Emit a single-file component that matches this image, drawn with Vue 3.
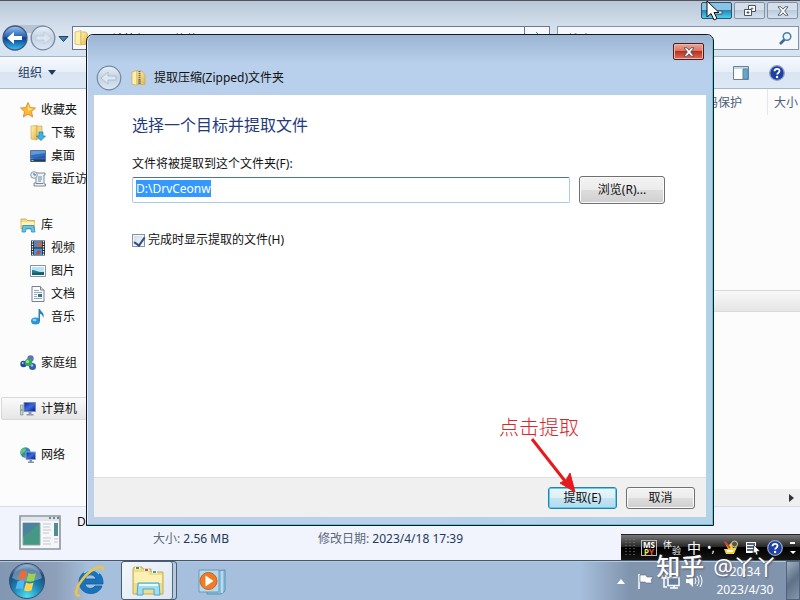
<script setup>
import { ref, onMounted } from "vue";

const folderPath = ref("D:\\DrvCeonw");
const showFiles = ref(true);
const searchText = ref("");
const pathInput = ref(null);

const navGroups = [
  [
    { name: "收藏夹", icon: "star", root: true },
    { name: "下载", icon: "download" },
    { name: "桌面", icon: "desktop" },
    { name: "最近访问的位置", icon: "recent" },
  ],
  [
    { name: "库", icon: "library", root: true },
    { name: "视频", icon: "video" },
    { name: "图片", icon: "picture" },
    { name: "文档", icon: "document" },
    { name: "音乐", icon: "music" },
  ],
  [{ name: "家庭组", icon: "homegroup", root: true }],
  [{ name: "计算机", icon: "computer", root: true, active: true }],
  [{ name: "网络", icon: "network", root: true }],
];

onMounted(() => {
  pathInput.value.focus();
  pathInput.value.select();
});
</script>

<template>
  <div class="screen">
    <!-- shared icon shapes -->
    <svg class="sprite" aria-hidden="true">
      <defs>
        <linearGradient id="gold" x1="0" y1="0" x2="1" y2="1">
          <stop offset="0" stop-color="#fff3b0" />
          <stop offset="1" stop-color="#e3b548" />
        </linearGradient>
        <linearGradient id="blueScreen" x1="0" y1="0" x2="1" y2="1">
          <stop offset="0" stop-color="#0a1fa8" />
          <stop offset="0.5" stop-color="#3a6be0" />
          <stop offset="1" stop-color="#0714a0" />
        </linearGradient>
        <linearGradient id="backBlue" x1="0" y1="0" x2="0" y2="1">
          <stop offset="0" stop-color="#9cc3ee" />
          <stop offset="0.45" stop-color="#2462b4" />
          <stop offset="0.5" stop-color="#0b3b8c" />
          <stop offset="1" stop-color="#35c3f5" />
        </linearGradient>
        <linearGradient id="glass" x1="0" y1="0" x2="0" y2="1">
          <stop offset="0" stop-color="#e9f0f8" />
          <stop offset="0.5" stop-color="#c3d1e2" />
          <stop offset="1" stop-color="#dde8f4" />
        </linearGradient>
        <radialGradient id="orb" cx="0.5" cy="0.95" r="0.95">
          <stop offset="0" stop-color="#4fe0f5" />
          <stop offset="0.45" stop-color="#1b82b4" />
          <stop offset="0.8" stop-color="#1d4878" />
          <stop offset="1" stop-color="#8fb0cc" />
        </radialGradient>
      </defs>
      <symbol id="star" viewBox="0 0 16 16">
        <path d="M8 .5l2.2 5 5.3.5-4 3.6 1.2 5.4L8 12.2 3.300 15l1.200-5.400-4-3.600 5.300-.5z" fill="#fdb833" stroke="#d9822b" stroke-width=".8" />
        <path d="M8 2.500l1.500 3.800 3.500.4L8 9z" fill="#ffe88a" />
      </symbol>
      <symbol id="download" viewBox="0 0 16 16">
        <path d="M1 1l6-.5V15L1 14z" fill="url(#gold)" stroke="#c8a24a" stroke-width=".6" />
        <path d="M7 1h5v13H7z" fill="#f0d680" stroke="#c8a24a" stroke-width=".6" />
        <path d="M9 7h4v4h2.500L11 15.600 6.500 11H9z" fill="#35b5e8" stroke="#1a7db5" stroke-width=".7" />
      </symbol>
      <symbol id="desktop" viewBox="0 0 16 16">
        <path d="M.5 2.500h15v11H.5z" fill="#2e63b5" stroke="#5b7596" />
        <path d="M1 3h14v4L1 11z" fill="#5f9bdc" />
        <path d="M1 7l14-2v5H1z" fill="#2358b0" opacity=".7" />
        <path d="M1 11.500h14v2H1z" fill="#273c58" />
        <path d="M1.500 12h2v1h-2z" fill="#8ee26c" />
      </symbol>
      <symbol id="recent" viewBox="0 0 16 16">
        <path d="M5 2h10v2h-1v9h1.500v2H4v-3h2V8z" fill="#edf1f4" stroke="#7d8a96" />
        <path d="M8 6h4M8 8h4M8 10h3M6 12.500h7" stroke="#6f8aa3" />
        <circle cx="4" cy="4" r="3.300" fill="#e6f0f8" stroke="#8a99a8" />
        <path d="M4 2v2h2" fill="none" stroke="#44688e" />
      </symbol>
      <symbol id="library" viewBox="0 0 16 16">
        <path d="M1 2h5l1 1.500h7.500V12H1z" fill="#f5dc85" stroke="#c5a44b" stroke-width=".8" />
        <path d="M1.500 5h13v3h-13z" fill="#fff2b4" />
        <path d="M2 15l1-6.500h10.500L15 15h-3.500l-.5-3.500H6L5.500 15z" fill="#62c5e8" stroke="#2c8bb8" stroke-width=".8" />
      </symbol>
      <symbol id="video" viewBox="0 0 16 16">
        <path d="M1 .5h14v15H1z" fill="#1e2633" />
        <path d="M4 1h8v6.500H4z" fill="#4c86c6" />
        <path d="M4 8.500h8V15H4z" fill="#3d9bdd" />
        <path d="M8 2l4 1v4L6 6z" fill="#c46b4c" />
        <path d="M8 10l3 1-1 3-5 1z" fill="#b65145" />
        <path d="M2.500 1v14M13.500 1v14" stroke="#e8edf2" stroke-width="1.400" stroke-dasharray="1.500 1" />
      </symbol>
      <symbol id="picture" viewBox="0 0 16 16">
        <path d="M.5 2.500h15v11H.5z" fill="#fff" stroke="#8795a3" />
        <path d="M2 4h12v8H2z" fill="#b5e6f7" />
        <path d="M2 7c4 0 6 3 12 2v3H2z" fill="#227f91" />
        <path d="M2 10l12-1v3H2z" fill="#15606b" />
      </symbol>
      <symbol id="document" viewBox="0 0 16 16">
        <path d="M2 .5h8.500L14 4v11.500H2z" fill="#fafcfd" stroke="#77828f" />
        <path d="M10.500.5V4H14" fill="#dbe3ea" stroke="#77828f" />
        <path d="M4 4.500h5M4 6.500h8M4 8.500h3M4 10.500h3M4 12.500h8" stroke="#8b9eaf" stroke-width=".9" />
        <path d="M8 8h4v3H8z" fill="#3a6f8c" />
      </symbol>
      <symbol id="music" viewBox="0 0 16 16">
        <ellipse cx="5.500" cy="12" rx="4.500" ry="3.500" fill="#2c93d8" />
        <ellipse cx="4.500" cy="11" rx="2" ry="1.200" fill="#8bd2f5" />
        <path d="M8.500 0h1.500c.5 3 5.500 4 3 9 0-3-1.500-4-3-4.300V12H8.500z" fill="#2a83b7" />
      </symbol>
      <symbol id="homegroup" viewBox="0 0 16 16">
        <circle cx="10.500" cy="3.500" r="3.200" fill="#5677b8" />
        <circle cx="3.500" cy="9" r="3.200" fill="#2848a4" />
        <circle cx="12.500" cy="11.500" r="3.500" fill="#355fae" />
        <circle cx="8.500" cy="7.500" r="3.800" fill="#37a85a" />
        <circle cx="7.500" cy="6.500" r="1.500" fill="#a5e59a" />
        <circle cx="2.800" cy="8" r="1" fill="#a9c9f5" />
        <circle cx="12" cy="10.500" r="1.200" fill="#9bc2f0" />
      </symbol>
      <symbol id="computer" viewBox="0 0 16 16">
        <path d="M.5 4h2.500v10H.5z" fill="#c7d0d8" stroke="#7c8995" stroke-width=".7" />
        <path d="M1 8h1.500v2H1z" fill="#63c04d" />
        <path d="M4 1.500h11.500v9H4z" fill="url(#blueScreen)" stroke="#7d8da3" />
        <path d="M8.500 11h3v2h2v1.500h-7V13h2z" fill="#8d9cad" />
      </symbol>
      <symbol id="network" viewBox="0 0 16 16">
        <circle cx="5.500" cy="5.500" r="5.200" fill="#2e87c8" />
        <path d="M2 2c3-2 5 0 3.500 2S2 6 1 8C0 6 0 4 2 2z" fill="#65c66b" />
        <path d="M3 8h3v2.500L4 10z" fill="#4cab52" />
        <path d="M6 5h9.500v7.500H6z" fill="url(#blueScreen)" stroke="#91a2bb" />
        <path d="M9.500 13h2.500v1.500h2V16H8v-1.500h1.500z" fill="#8495aa" />
      </symbol>
      <symbol id="zip" viewBox="0 0 16 16">
        <path d="M1 2l5-1.500V15l-5-.8z" fill="#fff0a8" stroke="#c8a544" stroke-width=".6" />
        <path d="M6 1h5l3 4v9.500H6z" fill="url(#gold)" stroke="#c8a544" stroke-width=".6" />
        <path d="M8.500 1v13" stroke="#69675c" stroke-width="2" stroke-dasharray="1.200 .8" />
        <path d="M7.500 10h2v3.500h-2z" fill="#89867b" />
      </symbol>
      <symbol id="folder" viewBox="0 0 16 16">
        <path d="M1 2l6-1.500V15l-6-.8z" fill="#fff0a8" stroke="#c8a544" stroke-width=".6" />
        <path d="M7 2h5l1.500 2v10.500H7z" fill="url(#gold)" stroke="#c8a544" stroke-width=".6" />
      </symbol>
      <symbol id="help" viewBox="0 0 16 16">
        <circle cx="8" cy="8" r="7.300" fill="#1e3fa6" stroke="#90a2c3" stroke-width="1.300" />
        <path d="M5.500 6.300C5.500 3 10.500 3 10.500 6c0 1.800-2.400 2-2.400 3.500" fill="none" stroke="#fff" stroke-width="1.800" />
        <circle cx="8.100" cy="12" r="1.200" fill="#fff" />
      </symbol>
      <symbol id="closeX" viewBox="0 0 12 10">
        <path d="M1 .8h3l2 2.400L8 .8h3L7.700 5 11 9.200H8L6 6.800 4 9.200H1L4.300 5z" fill="#fff" stroke="#4a5363" stroke-width=".9" />
      </symbol>
    </svg>

    <main class="explorer">
      <header class="top">
        <div class="window-buttons">
          <button class="win-btn hot" aria-label="最小化">
            <svg width="12" height="10" viewBox="0 0 12 10"><path d="M1 5h10v3H1z" fill="#fff" stroke="#35526e" /></svg>
          </button>
          <button class="win-btn" aria-label="还原">
            <svg width="12" height="11" viewBox="0 0 12 11">
              <path d="M4.500.5h7v6h-7z" fill="#fff" stroke="#4a5363" />
              <path d="M7 3h2v1H7z" fill="#aebdd0" stroke="#4a5363" stroke-width=".6" />
              <path d="M.5 4.500h7v6h-7z" fill="#fff" stroke="#4a5363" />
              <path d="M3 7h2v1H3z" fill="#aebdd0" stroke="#4a5363" />
            </svg>
          </button>
          <button class="win-btn" aria-label="关闭">
            <svg width="12" height="10"><use href="#closeX" /></svg>
          </button>
        </div>
        <div class="nav-row">
          <svg class="nav-arrows" width="70" height="28" viewBox="0 0 70 28">
            <path d="M14 1h30v8H14z" fill="#b4c4d6" />
            <circle cx="15" cy="14" r="12" fill="url(#backBlue)" stroke="#41587a" stroke-width="1.300" />
            <path d="M7 14l7-6v4h8v4h-8v4z" fill="#fff" />
            <circle cx="43" cy="14" r="11.800" fill="url(#glass)" stroke="#7688a0" stroke-width="1.300" />
            <path d="M51 14l-7-6v4h-8v4h8v4z" fill="#dce6f0" stroke="#b6c5d6" stroke-width=".6" />
            <path d="M59 12.500h9l-4.500 5z" fill="#3d86b4" stroke="#27405f" />
          </svg>
          <div class="address">
            <svg width="16" height="16"><use href="#folder" /></svg>
            <span>计算机</span>
            <span>软件 (D:)</span>
            <span>D</span>
            <span>DrvCeonw</span>
            <button class="refresh" aria-label="刷新">
              <svg width="14" height="14" viewBox="0 0 14 14"><path d="M3 9V4h5M6 1l3 3-3 3M11 5v5H6" fill="none" stroke="#3e8a76" /></svg>
            </button>
          </div>
          <label class="search">
            <input v-model="searchText" type="text" placeholder="搜索" aria-label="搜索" />
            <svg width="15" height="15" viewBox="0 0 15 15">
              <path d="M7 8L2 13" stroke="#426995" stroke-width="2.600" />
              <circle cx="9" cy="5.500" r="3.800" fill="#e8f4fc" stroke="#4e7ca9" stroke-width="1.500" />
            </svg>
          </label>
        </div>
      </header>

      <nav class="toolbar">
        <button class="organize">
          组织
          <svg width="8" height="5" viewBox="0 0 8 5"><path d="M0 0h8L4 5z" fill="#1e395b" /></svg>
        </button>
        <button class="tool" aria-label="预览窗格">
          <svg width="16" height="14" viewBox="0 0 16 14">
            <path d="M.5.5h15v13H.5z" fill="#fff" stroke="#66809f" />
            <path d="M1 1h14v2H1z" fill="#c5d7ea" />
            <path d="M10 3h5v10h-5z" fill="#5eaac8" stroke="#66809f" />
          </svg>
        </button>
        <button class="tool" aria-label="帮助">
          <svg width="16" height="16"><use href="#help" /></svg>
        </button>
      </nav>

      <div class="body">
        <aside class="sidebar">
          <ul v-for="(group, index) in navGroups" :key="index">
            <li v-for="item in group" :key="item.name">
              <a href="#" :class="{ root: item.root, active: item.active }">
                <svg width="16" height="16"><use :href="'#' + item.icon" /></svg>
                {{ item.name }}
              </a>
            </li>
          </ul>
        </aside>
        <section class="files">
          <div class="columns">
            <span>密码保护</span>
            <span class="size-col">大小</span>
          </div>
          <div class="selected-row"></div>
          <div class="scrollbar">
            <svg width="5" height="8" viewBox="0 0 5 8"><path d="M0 0l5 4-5 4z" fill="#333" /></svg>
          </div>
        </section>
      </div>

      <footer class="details">
        <svg width="42" height="35" viewBox="0 0 42 35">
          <path d="M1 1h40v33H1z" fill="#f4f6f8" stroke="#8b959f" stroke-width="1.600" />
          <path d="M2 2h38v4H2z" fill="#dfe5eb" />
          <path d="M30 3h2M34 3h2M38 3h2" stroke="#56616c" stroke-width="1.500" />
          <path d="M4 8h17v22H4z" fill="#459884" stroke="#8fa1ac" />
          <path d="M4 8h17L4 22z" fill="#4e83a0" />
          <path d="M24 9h8M24 12h7M24 15h8M24 18h6M24 23h8M24 26h7M24 29h8" stroke="#bfc9d1" />
          <path d="M35 8h4v13h-4z" fill="#508d91" />
          <path d="M35 24h4M35 27h4" stroke="#bfc9d1" />
        </svg>
        <div class="details-text">
          <span class="file-name">DrvCeonw</span>
          <div class="facts">
            <span>大小: <b>2.56 MB</b></span>
            <span>修改日期: <b>2023/4/18 17:39</b></span>
          </div>
        </div>
      </footer>
    </main>

    <footer class="taskbar">
      <button class="start" aria-label="开始">
        <svg width="38" height="38" viewBox="0 0 38 38">
          <circle cx="19" cy="19" r="17.500" fill="url(#orb)" stroke="#35506c" />
          <path d="M4 16C6 5 15 3 19 3s13 2 15 13c-9 4-20 5-30 0z" fill="#c9deee" opacity=".4" />
          <path d="M12 10c3-2 5-1 7 0l-2 8c-3-2-5-1-7 0z" fill="#f06a35" />
          <path d="M20.500 11c3 1.500 5 1 7.500 0l-2 8c-3 1-5 1-7.500 0z" fill="#9bd14d" />
          <path d="M9.500 19.500c3-1.500 5-1 7 0l-2 8c-2-1.500-5-1-7 0z" fill="#55b5ef" />
          <path d="M18 20.500c3 1.500 5 1 7.500 0l-2 8c-3 1-5 1-7.500 0z" fill="#ffd34a" />
        </svg>
      </button>
      <button class="task" aria-label="Internet Explorer">
        <svg width="34" height="34" viewBox="0 0 34 34">
          <path d="M30 20H12c1 5 7 6 10 2h7c-3 10-21 11-23-3C5 3 31 1 30 20zM12 15h11c-1-5-9-6-11 0z" fill="#1873bd" stroke="#125c99" stroke-width=".8" />
          <path d="M11 9c4-4 12-4 15 1" fill="none" stroke="#8cd2f5" stroke-width="1.500" />
          <path d="M30 6c1-7-13-1-21 10-7 9-8 18-2 15" fill="none" stroke="#edc34a" stroke-width="2.600" />
        </svg>
      </button>
      <button class="task current" aria-label="资源管理器">
        <svg width="34" height="32" viewBox="0 0 34 32">
          <path d="M2 4l1-2h8l1 2h8v3h12v22H2z" fill="#eedd8b" stroke="#c7aa51" />
          <path d="M3 7h14l2 3h12v8H3z" fill="#fcf1b2" />
          <path d="M4 3h5M13 5h5M21 7h5" stroke="#fff" stroke-width="2.500" />
          <path d="M5 3h3" stroke="#3c994c" stroke-width="2" />
          <path d="M14 5h3" stroke="#d05042" stroke-width="2" />
          <path d="M22 7h3" stroke="#3d9bb4" stroke-width="2" />
          <path d="M6 30l1-12h21l1 12h-6v-6H12v6z" fill="#9fdcf0" stroke="#4fa5c8" />
          <path d="M8 20h19" stroke="#e4faff" stroke-width="2" />
        </svg>
      </button>
      <button class="task player" aria-label="媒体播放器">
        <svg width="28" height="28" viewBox="0 0 28 28">
          <path d="M9 4l18-1v21l-4 3H9z" fill="#8fc1dc" stroke="#5793b8" />
          <path d="M24 4v22" stroke="#e2f3fc" />
          <path d="M1 3h20v22H1z" fill="#b8d9eb" stroke="#669bbe" />
          <circle cx="10.500" cy="14" r="8.500" fill="#ee7c24" stroke="#c96522" />
          <path d="M7.500 8.500l8 5.500-8 5.500z" fill="#fff" />
        </svg>
      </button>
      <div class="tray">
        <svg class="tray-icons" width="88" height="18" viewBox="0 0 88 18">
          <path d="M1 12l4-5 4 5z" fill="#fff" />
          <path d="M23 2v15" stroke="#fff" stroke-width="1.500" />
          <path d="M24 3h6l1 2h6l-2 3 1 3h-6l-1-1h-5z" fill="#fff" stroke="#566779" stroke-width=".6" />
          <path d="M52 5.500h11v8H52z" fill="#65809c" stroke="#fff" stroke-width="1.500" />
          <path d="M54 16h8M58 13v3M46 3v3h4V3M48 6v9h3" fill="none" stroke="#fff" stroke-width="1.500" />
          <path d="M70 7h3l4-4v12l-4-4h-3z" fill="#fff" />
          <path d="M79 6q2 3 0 6M81 4q4 5 0 10M84 3q4 6 0 12" fill="none" stroke="#fff" />
        </svg>
        <div class="clock">
          <time>20:34</time>
          <time>2023/4/30</time>
        </div>
        <button class="show-desktop" aria-label="显示桌面"></button>
      </div>
    </footer>

    <section class="dialog" role="dialog" aria-labelledby="dialogTitle">
      <header class="dialog-title">
        <button class="dialog-close" aria-label="关闭">
          <svg width="12" height="10"><use href="#closeX" /></svg>
        </button>
        <div class="title-row">
          <button class="dialog-back" aria-label="返回" disabled>
            <svg width="26" height="26" viewBox="0 0 26 26">
              <circle cx="13" cy="13" r="11.800" fill="url(#glass)" stroke="#7589a3" stroke-width="1.200" />
              <path d="M5 13l7-6v4h8v4h-8v4z" fill="#dce7f2" stroke="#a5b6ca" stroke-width=".8" />
            </svg>
          </button>
          <svg width="16" height="16"><use href="#zip" /></svg>
          <span id="dialogTitle">提取压缩(Zipped)文件夹</span>
        </div>
      </header>
      <form class="dialog-body" @submit.prevent>
        <div class="fields">
          <h1>选择一个目标并提取文件</h1>
          <label for="path">文件将被提取到这个文件夹(F):</label>
          <div class="path-row">
            <input id="path" ref="pathInput" v-model="folderPath" type="text" spellcheck="false" />
            <button type="button" class="btn browse">浏览(R)...</button>
          </div>
          <label class="check">
            <input v-model="showFiles" type="checkbox" />
            完成时显示提取的文件(H)
          </label>
        </div>
        <div class="actions">
          <button type="submit" class="btn primary">提取(E)</button>
          <button type="button" class="btn">取消</button>
        </div>
      </form>
      <div class="hint">
        <span>点击提取</span>
        <svg width="50" height="58" viewBox="0 0 50 58">
          <path d="M5 1l33 42" stroke="#e8191c" stroke-width="3" />
          <path d="M48 54L33 45l6-3 4-7z" fill="#e8191c" stroke="#e8191c" />
        </svg>
      </div>
    </section>

    <div class="ime">
      <svg width="10" height="18" viewBox="0 0 10 18">
        <path d="M1 0v18M5 0v18M9 0v18" stroke="#85898c" stroke-dasharray="1 2" />
      </svg>
      <div class="mspy"><span>MS</span><span><i>P</i><em>Y</em></span></div>
      <div class="ime-small"><span>体</span><span>验</span></div>
      <span class="ime-cn">中</span>
      <span class="ime-dots">•,</span>
      <svg width="16" height="16" viewBox="0 0 16 16">
        <path d="M1 1l4 5 3-3 2 5 4-1-3 7H3L1 9h4z" fill="#f4d63c" />
        <path d="M2 2l5 6" stroke="#df3f2f" stroke-width="2" />
        <circle cx="11.500" cy="4" r="3" fill="#55554a" stroke="#d8d29c" />
        <path d="M4 11h6" stroke="#fff" stroke-width="2" />
      </svg>
      <svg width="16" height="16" viewBox="0 0 16 16">
        <path d="M1 2h10v11H1z" fill="#fff" />
        <path d="M2 4h8M2 7h8M2 10h8" stroke="#26325e" stroke-width="1.500" />
        <path d="M9 5l6 6-3 .5 1 3-2 .5-1-3-2 1z" fill="#fff" stroke="#111" stroke-width=".7" />
      </svg>
      <svg width="16" height="16"><use href="#help" /></svg>
      <svg width="7" height="14" viewBox="0 0 7 14"><path d="M1 2h5" stroke="#fff" stroke-width="2" /><path d="M1 10h6l-3 3z" fill="#fff" /></svg>
    </div>

    <div class="watermark"><strong>知乎</strong><span>@丫丫</span></div>

    <svg class="cursor" width="14" height="22" viewBox="0 0 14 22">
      <path d="M1 1v16l4-3.500L8 20l3-1.500-3-6h5z" fill="#fff" stroke="#111" />
    </svg>
  </div>
</template>

<style>
body {
  margin: 0;
}
</style>

<style scoped>
.screen {
  position: relative;
  display: flex;
  flex-direction: column;
  height: 100vh;
  overflow: hidden;
  font-family: "Noto Sans", "Noto Sans CJK SC", sans-serif;
  font-size: 12px;
  line-height: 16px;
  color: #111;
}

.screen * {
  box-sizing: border-box;
}

button,
input {
  font: inherit;
  color: inherit;
}

button {
  padding: 0;
  border: none;
  background: none;
}

svg {
  display: block;
  flex: none;
}

.sprite {
  position: absolute;
  width: 0;
  height: 0;
}

.explorer {
  flex: 1;
  min-height: 0;
  display: flex;
  flex-direction: column;
}

.top {
  height: 57px;
  border-top: 1px solid #50535c;
  border-bottom: 1px solid #a5b5c8;
  background: linear-gradient(#b9c8d9, #dae4f0 32px, #d6e3f1);
}

.window-buttons {
  display: flex;
  justify-content: flex-end;
  gap: 2px;
  padding: 1px 2px 0 0;
  height: 23px;
}

.win-btn {
  display: flex;
  align-items: center;
  justify-content: center;
  width: 31px;
  height: 17px;
  border: 1px solid #8291a5;
  border-radius: 2px;
  background: linear-gradient(#d5dfeb 50%, #bccbdc 50%, #d5e1ed);
}

.win-btn.hot {
  border-color: #2b5270;
  background: linear-gradient(#8ac3e4 45%, #2686b8 50%, #4bd2ee);
}

.nav-row {
  display: flex;
  align-items: center;
  gap: 2px;
  padding-right: 1px;
}

.address {
  display: flex;
  align-items: center;
  flex: 1;
  height: 24px;
  margin-right: 5px;
  padding-left: 1px;
  border: 1px solid #68788d;
  background: #f5f8fc;
}

.address span {
  margin-left: 22px;
  padding-top: 4px;
}

.address span + span {
  margin-left: 26px;
}

.address span:nth-of-type(3) {
  margin-left: 42px;
}

.address span:nth-of-type(4) {
  margin-left: 54px;
}

.refresh {
  display: flex;
  align-items: center;
  height: 100%;
  margin-left: auto;
  padding: 0 5px;
  border-left: 1px solid #68788d;
}

.search {
  display: flex;
  align-items: center;
  width: 242px;
  height: 24px;
  padding: 0 5px 0 10px;
  border: 1px solid #8494a8;
  background: #f4f7fb;
}

.search input {
  flex: 1;
  min-width: 0;
  padding: 4px 0 0;
  border: none;
  outline: none;
  background: none;
}

.toolbar {
  display: flex;
  align-items: center;
  gap: 20px;
  height: 32px;
  padding: 0 15px 0 18px;
  border-bottom: 1px solid #a8b7c9;
  background: linear-gradient(#f6f9fd, #e7eef8 50%, #dbe5f2 50%, #dde8f5);
  color: #1e395b;
}

.organize {
  display: flex;
  align-items: center;
  gap: 6px;
  margin-right: auto;
}

.body {
  flex: 1;
  display: flex;
  min-height: 0;
  background: #fcfcfc;
}

.sidebar {
  width: 160px;
  padding-top: 9px;
  overflow: hidden;
}

.sidebar ul {
  margin: 0 0 23px;
  padding: 0;
  list-style: none;
}

.sidebar a {
  display: flex;
  align-items: center;
  gap: 5px;
  height: 23px;
  margin-left: 1px;
  padding-left: 28px;
  border: 1px solid transparent;
  border-radius: 2px;
  color: #111;
  text-decoration: none;
  white-space: nowrap;
}

.sidebar a.root {
  padding-left: 18px;
}

.sidebar a.active {
  border-color: #d9d9d9;
  background: linear-gradient(#fafafa, #e6e6e6);
}

.files {
  flex: 1;
  display: flex;
  flex-direction: column;
}

.columns {
  display: flex;
  justify-content: flex-end;
  height: 26px;
  line-height: 28px;
  color: #4c607a;
}

.columns span {
  width: 78px;
  padding-right: 6px;
}

.columns span:first-child {
  padding-left: 5px;
}

.columns .size-col {
  width: 33px;
  padding: 0 0 0 6px;
  border-left: 1px solid #e3e8ee;
  white-space: nowrap;
}

.selected-row {
  height: 22px;
  margin-top: 175px;
  border: 1px solid #d9d9d9;
  border-right: none;
  background: linear-gradient(#f8f8f8, #e5e5e5);
}

.scrollbar {
  display: flex;
  align-items: center;
  justify-content: flex-end;
  height: 17px;
  margin-top: auto;
  padding-right: 6px;
  background: #efefef;
}

.details {
  display: flex;
  align-items: flex-start;
  gap: 16px;
  height: 54px;
  padding: 8px 19px 0;
  border-top: 1px solid #d3dce8;
  background: #f1f4fc;
}

.details-text {
  display: flex;
  flex-direction: column;
  gap: 2px;
}

.file-name {
  line-height: 14px;
}

.facts {
  display: flex;
  gap: 89px;
  padding-left: 76px;
  color: #5a6779;
}

.facts b {
  font-weight: normal;
  color: #1e395b;
}

.taskbar {
  display: flex;
  align-items: stretch;
  height: 40px;
  border-top: 1px solid #44566b;
  box-shadow: inset 0 1px #b5c9df;
  background: linear-gradient(90deg, #8297b3, #8d9fb9 55px, #a6bfdc 90px, #a6bfdc 580px, #8094ae 630px, #8094ae);
}

.start {
  padding-left: 8px;
}

.task {
  display: flex;
  align-items: center;
  justify-content: center;
  width: 56px;
  margin-left: 16px;
}

.task.current {
  margin-left: 3px;
  padding-right: 2px;
  border: 1px solid #4b5c72;
  border-radius: 3px;
  background: linear-gradient(135deg, #f3f7fb, #dbe5f1);
  box-shadow: inset -3px 0 #b5c9df, inset -4px 0 #56687f;
}

.task.player {
  margin-left: 7px;
}

.tray {
  display: flex;
  margin-left: auto;
}

.tray-icons {
  margin-top: 11px;
}

.clock {
  display: flex;
  flex-direction: column;
  align-items: center;
  gap: 2px;
  width: 82px;
  padding-top: 3px;
  color: #fff;
}

.show-desktop {
  width: 14px;
  border: 1px solid #52647b;
  background: linear-gradient(135deg, #9dafc3, #5e7187 50%, #8496ac);
}

/* the wizard lies over the explorer window */
.dialog {
  position: absolute;
  top: 34px;
  right: 86px;
  bottom: 74px;
  left: 86px;
  display: flex;
  flex-direction: column;
  padding: 0 7px 8px;
  border: 1px solid #111820;
  border-radius: 7px 7px 0 0;
  background: linear-gradient(90deg, #bfd0e9, #b9d0ea 50%, #b2d3e7);
  box-shadow: inset -1px -1px #5cc8dc, inset 1px 1px #e3eef8;
}

.dialog-title {
  height: 60px;
  margin: 0 -6px;
  padding: 0 6px;
  border-radius: 6px 6px 0 0;
  background: linear-gradient(#9bb4d2, #b8d0eb 28px, #b8d0eb);
}

.dialog-close {
  display: flex;
  align-items: center;
  justify-content: center;
  width: 31px;
  height: 17px;
  margin: 8px 2px 5px auto;
  border: 1px solid #4c1c1c;
  border-radius: 2px;
  background: linear-gradient(#eaa698, #d9735f 48%, #bc301c 50%, #d8705a);
  box-shadow: inset 0 0 0 1px #efb5a8;
}

.title-row {
  display: flex;
  align-items: center;
  gap: 7px;
  padding-left: 2px;
}

.dialog-back {
  margin-right: 2px;
}

.dialog-body {
  flex: 1;
  display: flex;
  flex-direction: column;
  background: #fff;
}

.fields {
  flex: 1;
  padding: 19px 41px 0 38px;
}

h1 {
  margin: 0 0 20px;
  font-size: 16px;
  font-weight: normal;
  line-height: 22px;
  color: #1f3a7d;
}

.fields label {
  display: block;
}

.path-row {
  display: flex;
  align-items: center;
  gap: 9px;
  margin: 4px 0 28px;
}

.path-row input {
  flex: 1;
  min-width: 0;
  height: 26px;
  padding: 0 3px 3px;
  border: 1px solid #a9cbe4;
  border-top-color: #4e7590;
  border-radius: 2px;
  outline: none;
  background: #fff;
}

.path-row input::selection {
  background: #3399ff;
  color: #fff;
}

.btn {
  width: 69px;
  height: 22px;
  border: 1px solid #707070;
  border-radius: 3px;
  background: linear-gradient(#f3f3f3, #ebebeb 50%, #dddddd 50%, #cfcfcf);
  box-shadow: inset 0 0 0 1px #fafafa;
}

.btn.browse {
  width: 86px;
  height: 28px;
}

.btn.primary {
  border-color: #2c7fa8;
  background: linear-gradient(#edf6fa, #dceef7 50%, #c5e3f1 50%, #b4dbee);
  box-shadow: inset 0 0 0 1px #55d0f2;
}

.fields .check {
  display: flex;
  align-items: center;
  gap: 3px;
}

.check input {
  appearance: none;
  width: 13px;
  height: 13px;
  margin: 0;
  border: 1px solid #8395a8;
  background: linear-gradient(135deg, #cfd8e2, #f8fafc);
  box-shadow: inset 0 0 0 1px #f4f4f4;
}

.check input:checked::before {
  content: "";
  display: block;
  width: 5px;
  height: 9px;
  margin: 0 0 0 3px;
  border: solid #354f87;
  border-width: 0 2px 2px 0;
  transform: rotate(35deg);
}

.actions {
  display: flex;
  align-items: center;
  justify-content: flex-end;
  gap: 9px;
  height: 40px;
  padding-right: 11px;
  border-top: 1px solid #dfdfdf;
  background: #f0f0f0;
}

.hint {
  position: absolute;
  right: 134px;
  bottom: 29px;
  color: #d8262b;
  font-family: "Liberation Serif", "Noto Sans CJK SC", serif;
  font-size: 20px;
  font-weight: 300;
  line-height: 24px;
}

.hint svg {
  margin: -2px 0 0 28px;
}

.ime {
  position: absolute;
  right: 0;
  bottom: 40px;
  display: flex;
  align-items: center;
  gap: 6px;
  width: 179px;
  height: 26px;
  padding: 0 4px;
  border-top: 1px solid #222;
  background: linear-gradient(#777, #222 50%, #000 50%, #161616);
  color: #fff;
}

.mspy {
  width: 16px;
  height: 16px;
  border: 1px solid #bbb;
  font-size: 8px;
  font-weight: bold;
  line-height: 7px;
  text-align: center;
}

.mspy span {
  display: block;
}

.mspy i {
  font-style: normal;
  color: #ffe14a;
}

.mspy em {
  font-style: normal;
  color: #f04a3c;
}

.ime-small {
  display: flex;
  justify-content: space-between;
  width: 18px;
  height: 16px;
  font-size: 9px;
  line-height: 10px;
}

.ime-small span:last-child {
  align-self: flex-end;
}

.ime-cn {
  font-size: 14px;
}

.ime-dots {
  width: 10px;
}

.watermark {
  position: absolute;
  right: 23px;
  bottom: 20px;
  display: flex;
  gap: 9px;
  color: #fff;
  font-size: 22px;
  line-height: 28px;
  text-shadow: 1px 1px 2px #556;
  white-space: nowrap;
}

.watermark strong {
  font-size: 24px;
  font-weight: 500;
}

.cursor {
  position: absolute;
  top: 0;
  right: 80px;
}
</style>
